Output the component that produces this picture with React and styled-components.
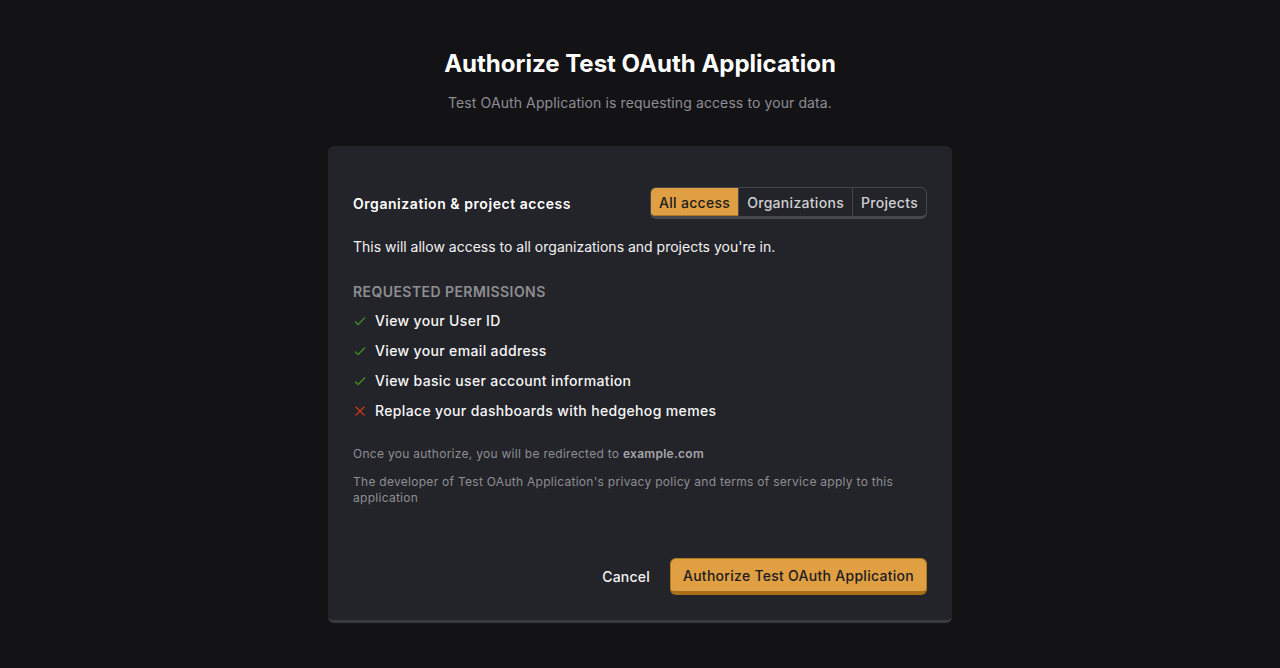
import React, {useState} from "react";
import styled, {createGlobalStyle} from "styled-components";

const GlobalStyle = createGlobalStyle`
    body {
      margin: 0;
      background: #131316;
      font-family: Inter, "Noto Sans", sans-serif;
      color: #f5f5f6;
    }
    * { box-sizing: border-box; }
`

const Page = styled.div`
    display: flex;
    flex-direction: column;
    align-items: center;
    padding-top: 48px;
    min-height: 668px;
`

const Title = styled.h1`
    margin: 0;
    font-size: 24px;
    line-height: 32px;
    font-weight: 700;
    color: #ffffff;
`

const Subtitle = styled.p`
    margin: 13px 0 0;
    font-size: 14px;
    line-height: 20px;
    letter-spacing: 0.1px;
    color: #8e8e93;
`

const Card = styled.div`
    width: 624px;
    margin-top: 33px;
    padding: 41px 25px 25px;
    background: #232429;
    border-radius: 6px;
    border-bottom: 3px solid #393a40;
`

const HeaderRow = styled.div`
    display: flex;
    justify-content: space-between;
    align-items: center;
`

const SectionTitle = styled.div`
    font-size: 14px;
    font-weight: 600;
    letter-spacing: 0.55px;
    color: #ffffff;
    padding-top: 1px;
`

const Segmented = styled.div`
    display: flex;
    border: 1px solid #46474d;
    border-bottom-width: 3px;
    border-radius: 6px;
    overflow: hidden;
`

const Segment = styled.button`
    font-family: inherit;
    font-size: 14px;
    font-weight: 500;
    letter-spacing: 0.3px;
    height: 28px;
    padding: 0 8px;
    border: none;
    border-left: ${({first}) => first ? "none" : "1px solid #46474d"};
    background: ${({active}) => active ? "#e09f43" : "transparent"};
    color: ${({active}) => active ? "#1c1c1e" : "#d0d0d4"};
    box-shadow: ${({active}) => active ? "inset 0 -1px 0 #b07a22" : "none"};
    cursor: pointer;
`

const Description = styled.p`
    margin: 18px 0 0;
    font-size: 14px;
    line-height: 20px;
    color: #f2f2f3;
`

const PermHeader = styled.div`
    margin-top: 25px;
    font-size: 14px;
    line-height: 20px;
    font-weight: 600;
    letter-spacing: 0.43px;
    text-transform: uppercase;
    color: #8e8e93;
`

const PermList = styled.ul`
    list-style: none;
    margin: 9px 0 0;
    padding: 0;
    display: flex;
    flex-direction: column;
    gap: 10px;
`

const PermItem = styled.li`
    display: flex;
    align-items: center;
    gap: 8px;
    font-size: 14px;
    line-height: 20px;
    font-weight: 500;
    letter-spacing: 0.35px;
    color: #f7f7f8;

    svg {
      flex-shrink: 0;
    }
`

const Fine = styled.p`
    margin: ${({first}) => first ? "25px" : "12px"} 0 0;
    font-size: 12px;
    line-height: 16px;
    letter-spacing: 0.28px;
    color: #8e8e93;

    b {
      font-weight: 600;
      color: #a5a5aa;
    }
`

const Actions = styled.div`
    display: flex;
    justify-content: flex-end;
    align-items: center;
    gap: 8px;
    margin-top: 52px;
`

const CancelButton = styled.button`
    font-family: inherit;
    font-size: 14px;
    font-weight: 500;
    letter-spacing: 0.2px;
    background: transparent;
    border: none;
    color: #f5f5f6;
    height: 37px;
    padding: 0 12px;
    cursor: pointer;
`

const PrimaryButton = styled.button`
    font-family: inherit;
    font-size: 14px;
    font-weight: 500;
    letter-spacing: 0.28px;
    height: 37px;
    padding: 0 12px;
    background: #e09f43;
    color: #1c1c1e;
    border: 1px solid #b07a22;
    border-bottom: 4px solid #a86f18;
    border-radius: 6px;
    cursor: pointer;
`

const Check = () => (
    <svg width="14" height="14" viewBox="0 0 14 14" fill="none">
        <path d="M2 7.5 L5.2 10.5 L12 3.5" stroke="#3f8a1f" strokeWidth="1.3"/>
    </svg>
)

const Cross = () => (
    <svg width="14" height="14" viewBox="0 0 14 14" fill="none">
        <path d="M2.5 2.5 L11.5 11.5 M11.5 2.5 L2.5 11.5" stroke="#c8381c" strokeWidth="1.3"/>
    </svg>
)

const permissions = [
    {label: "View your User ID", ok: true},
    {label: "View your email address", ok: true},
    {label: "View basic user account information", ok: true},
    {label: "Replace your dashboards with hedgehog memes", ok: false},
]

const scopes = ["All access", "Organizations", "Projects"]

const App = () => {
    const [scope, setScope] = useState("All access")

    return (<Page>
        <GlobalStyle/>
        <Title>Authorize Test OAuth Application</Title>
        <Subtitle>Test OAuth Application is requesting access to your data.</Subtitle>

        <Card>
            <HeaderRow>
                <SectionTitle>Organization &amp; project access</SectionTitle>
                <Segmented>
                    {scopes.map((s, i) => (
                        <Segment key={s} first={i === 0} active={scope === s} onClick={() => setScope(s)}>
                            {s}
                        </Segment>
                    ))}
                </Segmented>
            </HeaderRow>

            <Description>This will allow access to all organizations and projects you're in.</Description>

            <PermHeader>Requested permissions</PermHeader>
            <PermList>
                {permissions.map(p => (
                    <PermItem key={p.label}>
                        {p.ok ? <Check/> : <Cross/>}
                        {p.label}
                    </PermItem>
                ))}
            </PermList>

            <Fine first>Once you authorize, you will be redirected to <b>example.com</b></Fine>
            <Fine>The developer of Test OAuth Application's privacy policy and terms of service apply to this application</Fine>

            <Actions>
                <CancelButton>Cancel</CancelButton>
                <PrimaryButton>Authorize Test OAuth Application</PrimaryButton>
            </Actions>
        </Card>
    </Page>)
}

export default App;
